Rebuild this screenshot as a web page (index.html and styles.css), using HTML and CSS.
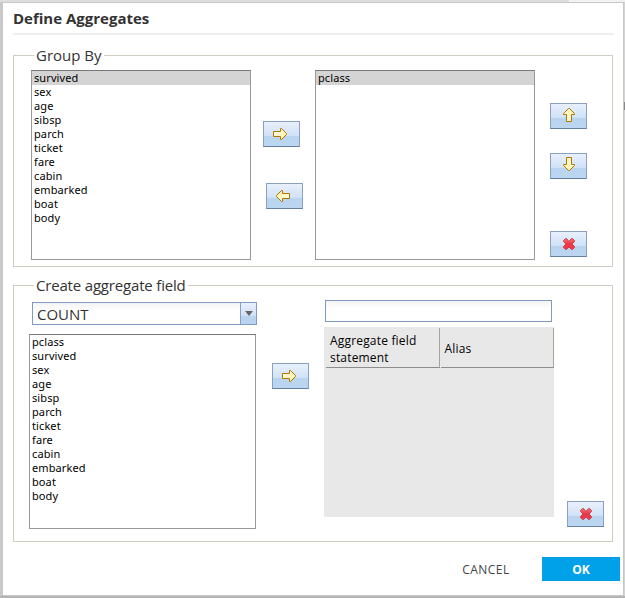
FILE: index.html
```html
<!DOCTYPE html>
<html lang="en">
<head>
<meta charset="utf-8">
<title>Define Aggregates</title>
<link rel="stylesheet" href="styles.css">
</head>
<body>
<svg class="defs" width="0" height="0" aria-hidden="true">
  <defs>
    <linearGradient id="gold" x1="0" y1="0" x2="1" y2="1"><stop offset="0" stop-color="#fffef0"/><stop offset="1" stop-color="#ffef98"/></linearGradient>
    <linearGradient id="red" x1="0" y1="0" x2="0" y2="1"><stop offset="0" stop-color="#ee7672"/><stop offset=".5" stop-color="#ee3545"/><stop offset="1" stop-color="#e83f50"/></linearGradient>
    <symbol id="arrow" viewBox="0 0 15 13"><path d="M.5 3.5H7.5V.5H8.5L13.5 5.5V6.5L8.5 11.5H7.5V8.5H.5Z" fill="url(#gold)" stroke="#b27500"/></symbol>
    <symbol id="cross" viewBox="0 0 12 12"><path d="M2.5.5H3.5L6 3.5L8.5.5H9.5L11.5 2.5V3.5L9 6L11.5 8.5V9.5L9.5 11.5H8.5L6 9L3.5 11.5H2.5L.5 9.5V8.5L3 6L.5 3.5V2.5Z" fill="url(#red)" stroke="#c9404a"/></symbol>
  </defs>
</svg>
<div class="dialog" role="dialog" aria-labelledby="title">
  <h1 class="title" id="title">Define Aggregates</h1>
  <fieldset class="group group-by">
    <legend>Group By</legend>
    <ul class="list list-source"><li class="selected">survived</li><li>sex</li><li>age</li><li>sibsp</li><li>parch</li><li>ticket</li><li>fare</li><li>cabin</li><li>embarked</li><li>boat</li><li>body</li></ul>
    <div class="transfer">
      <button class="btn" aria-label="Add"><svg class="arrow"><use href="#arrow"/></svg></button>
      <button class="btn btn-back" aria-label="Remove"><svg class="arrow left"><use href="#arrow"/></svg></button>
    </div>
    <ul class="list list-target"><li class="selected">pclass</li></ul>
    <div class="order">
      <button class="btn" aria-label="Move up"><svg class="arrow up"><use href="#arrow"/></svg></button>
      <button class="btn" aria-label="Move down"><svg class="arrow down"><use href="#arrow"/></svg></button>
      <button class="btn btn-delete" aria-label="Delete"><svg class="cross"><use href="#cross"/></svg></button>
    </div>
  </fieldset>
  <fieldset class="group aggregate">
    <legend>Create aggregate field</legend>
    <div class="source">
      <div class="combo"><span class="combo-value">COUNT</span><span class="combo-trigger"></span></div>
      <ul class="list list-fields"><li>pclass</li><li>survived</li><li>sex</li><li>age</li><li>sibsp</li><li>parch</li><li>ticket</li><li>fare</li><li>cabin</li><li>embarked</li><li>boat</li><li>body</li></ul>
    </div>
    <button class="btn btn-apply" aria-label="Add field"><svg class="arrow"><use href="#arrow"/></svg></button>
    <div class="result">
      <input class="alias-input" type="text" aria-label="Alias">
      <div class="table">
        <div class="head"><div class="th">Aggregate field statement</div><div class="th">Alias</div></div>
      </div>
    </div>
    <button class="btn btn-remove" aria-label="Delete field"><svg class="cross"><use href="#cross"/></svg></button>
  </fieldset>
  <div class="footer">
    <button class="action cancel">CANCEL</button>
    <button class="action ok">OK</button>
  </div>
</div>
</body>
</html>
```
FILE: styles.css
```css
* { box-sizing: border-box; }
body { margin: 0; height: 598px; padding: 2px 1px 2px 2px; overflow: hidden; background: linear-gradient(#888, #888) 100% 102px / 1px 8px no-repeat, linear-gradient(90deg, #ddd 569px, #f1f1f1 569px) top / 100% 2px no-repeat, linear-gradient(90deg, #c9c9c9 50%, #d4d4d4 50%) top / 100% 596px no-repeat, #b4b4b4; font-family: "Open Sans", sans-serif; }
.defs { position: absolute; }
.dialog { width: 622px; height: 594px; padding: 0 9px 0 10px; background: #fff; border: 1px solid #c7c7c7; }
.title { margin: 0; height: 32px; border-bottom: 2px solid #eee; color: #333; font-size: 15px; line-height: 30px; font-weight: 700; }
.group { position: relative; display: flex; align-items: flex-start; width: 600px; margin: 0; padding: 0; border: 1px solid #cfcfbf; }
.group legend { padding: 0 2px; margin-left: 20px; height: 20px; color: #333; font-size: 15px; line-height: 20px; }
.group-by { margin-top: 10px; height: 222px; }
.list { list-style: none; margin: 0; padding: 0; border: 1px solid #999; border-top-color: #777; background: #fff; font: 11px/14px "Noto Sans", sans-serif; letter-spacing: .1px; color: #000; }
.list li { height: 14px; padding-left: 2px; }
.selected { background: #d4d4d4; }
.list-source, .list-target { width: 220px; height: 190px; margin-top: 5px; }
.list-source { margin-left: 17px; }
.transfer { width: 64px; padding: 56px 0 0 12px; }
.btn { display: flex; align-items: center; justify-content: center; flex: none; width: 37px; height: 26px; padding: 0; border: 1px solid #8aa0c0; border-bottom-color: #6580a5; border-radius: 0; background: linear-gradient(#e9f0fc, #cfe1f8 60%, #b9d4f0 60%, #bcd6f1); }
.btn-back { margin: 36px 0 0 3px; }
.arrow { width: 15px; height: 13px; margin: 0 2px 0 0; }
.left { transform: rotate(180deg); margin: -1px 4px 0 0; }
.up { transform: rotate(-90deg); margin: -3px 0 0 1px; }
.down { transform: rotate(90deg); margin: -3px 0 0; }
.cross { width: 12px; height: 12px; margin-left: 1px; }
.order { margin-left: 15px; padding-top: 38px; }
.order .btn + .btn { margin-top: 24px; }
.order .btn.btn-delete { margin-top: 52px; }
.aggregate { margin-top: 8px; height: 267px; }
.aggregate legend { letter-spacing: -.18px; }
.source { width: 228px; margin-left: 15px; padding-top: 7px; }
.combo { display: flex; width: 225px; height: 23px; margin-left: 3px; border: 1px solid #7f9bc0; background: linear-gradient(#f4f4f4, #fff 8px); }
.combo-value { flex: 1; padding-left: 4px; color: #333; font-size: 15px; line-height: 22px; }
.combo-trigger { width: 16px; border-left: 1px solid #8aa0c0; background: linear-gradient(#e9f0fc, #cfe1f8 60%, #b9d4f0 60%); display: flex; justify-content: center; align-items: center; }
.combo-trigger::before { content: ""; border: 4px solid transparent; border-top: 5px solid #666; border-bottom: 0; }
.list-fields { width: 227px; height: 195px; margin-top: 9px; }
.btn-apply { margin: 68px 0 0 15px; }
.result { width: 230px; margin: 5px 0 0 15px; }
.alias-input { display: block; width: 227px; height: 22px; margin: 0 0 5px 1px; padding: 0 3px; border: 1px solid #7f9bc0; border-radius: 0; background: linear-gradient(#f4f4f4, #fff 8px); }
.table { height: 190px; padding: 1px 0 0 2px; background: #e8e8e8; }
.head { display: flex; gap: 1px; height: 40px; }
.th { display: flex; align-items: center; width: 114px; padding: 2px 0 0 4px; border-right: 1px solid #a5a598; border-bottom: 1px solid #8d8d8d; color: #000; font-size: 12px; line-height: 17px; letter-spacing: .18px; }
.th:first-child { padding-right: 15px; }
.btn-remove { margin: 206px 0 0 13px; }
.footer { display: flex; justify-content: flex-end; margin: 15px -6px 0 0; }
.action { height: 24px; padding: 0; border: 0; font: 12px/24px "Open Sans", sans-serif; }
.cancel { width: 112px; padding: 1px 0 0; background: none; color: #444; letter-spacing: .45px; }
.ok { width: 78px; padding-top: 1px; background: #00a1e8; color: #fff; font-weight: 700; line-height: 23px; }
```
